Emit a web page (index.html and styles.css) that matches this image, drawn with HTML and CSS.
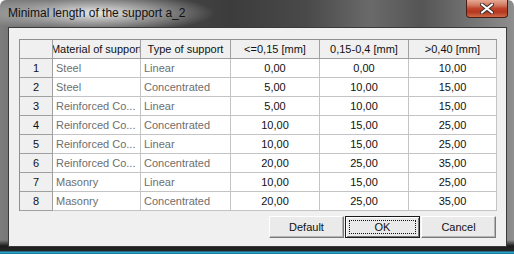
FILE: index.html
```html
<!DOCTYPE html>
<html lang="en">

<head>
    <meta charset="UTF-8">
    <title>Minimal length of the support a_2</title>
    <link rel="stylesheet" href="styles.css">
</head>

<body>
    <div class="window">
        <div class="titlebar">
            <span class="title">Minimal length of the support a_2</span>
            <div class="close">
                <svg width="14" height="11" viewBox="0 0 14 11">
                    <path d="M2 1.5 L12 9.5 M12 1.5 L2 9.5" stroke="#3a2a28" stroke-width="4" stroke-linecap="round" />
                    <path d="M2 1.5 L12 9.5 M12 1.5 L2 9.5" stroke="#ffffff" stroke-width="2.2" stroke-linecap="round" />
                </svg>
            </div>
        </div>
        <div class="client">
            <table class="grid">
                <tr class="head">
                    <th class="rowhead c1"></th>
                    <th class="c2"><span>Material of support</span></th>
                    <th class="c3"><span>Type of support</span></th>
                    <th class="c4"><span>&lt;=0,15 [mm]</span></th>
                    <th class="c5"><span>0,15-0,4 [mm]</span></th>
                    <th class="c6"><span>&gt;0,40 [mm]</span></th>
                </tr>
                <tr>
                    <th class="rowhead">1</th>
                    <td class="txt">Steel</td>
                    <td class="txt">Linear</td>
                    <td>0,00</td>
                    <td>0,00</td>
                    <td>10,00</td>
                </tr>
                <tr>
                    <th class="rowhead">2</th>
                    <td class="txt">Steel</td>
                    <td class="txt">Concentrated</td>
                    <td>5,00</td>
                    <td>10,00</td>
                    <td>15,00</td>
                </tr>
                <tr>
                    <th class="rowhead">3</th>
                    <td class="txt">Reinforced Co...</td>
                    <td class="txt">Linear</td>
                    <td>5,00</td>
                    <td>10,00</td>
                    <td>15,00</td>
                </tr>
                <tr>
                    <th class="rowhead">4</th>
                    <td class="txt">Reinforced Co...</td>
                    <td class="txt">Concentrated</td>
                    <td>10,00</td>
                    <td>15,00</td>
                    <td>25,00</td>
                </tr>
                <tr>
                    <th class="rowhead">5</th>
                    <td class="txt">Reinforced Co...</td>
                    <td class="txt">Linear</td>
                    <td>10,00</td>
                    <td>15,00</td>
                    <td>25,00</td>
                </tr>
                <tr>
                    <th class="rowhead">6</th>
                    <td class="txt">Reinforced Co...</td>
                    <td class="txt">Concentrated</td>
                    <td>20,00</td>
                    <td>25,00</td>
                    <td>35,00</td>
                </tr>
                <tr>
                    <th class="rowhead">7</th>
                    <td class="txt">Masonry</td>
                    <td class="txt">Linear</td>
                    <td>10,00</td>
                    <td>15,00</td>
                    <td>25,00</td>
                </tr>
                <tr>
                    <th class="rowhead">8</th>
                    <td class="txt">Masonry</td>
                    <td class="txt">Concentrated</td>
                    <td>20,00</td>
                    <td>25,00</td>
                    <td>35,00</td>
                </tr>
            </table>
            <div class="buttons">
                <button class="btn">Default</button>
                <button class="btn default"><span class="focus">OK</span></button>
                <button class="btn">Cancel</button>
            </div>
        </div>
    </div>
</body>

</html>
```

FILE: styles.css
```css
body {
    margin: 0;
    background-color: #ffffff;
}

.window {
    width: 514px;
    height: 254px;
    box-sizing: border-box;
    padding: 0 7px 7px 8px;
    border-radius: 6px 6px 0 0;
    background:
        radial-gradient(ellipse 120px 20px at 95px 13px, rgba(240, 240, 240, 0.95), rgba(240, 240, 240, 0) 100%),
        linear-gradient(180deg, rgba(0, 0, 0, 0) 240px, #1c1c1c 246px, #262626 251px, #2bb2dc 252px, #1a6f8c 254px),
        linear-gradient(90deg, #7d7d7d 0, #555555 10%, #3c3c3c 45%, #4a4a4a 60%, #6a6a6a 72%, #555555 82%, #8e8e8e 100%);
    font-family: "Liberation Sans", Arial, sans-serif;
}

.titlebar {
    height: 27px;
    display: flex;
    justify-content: space-between;
    align-items: flex-start;
}

.title {
    padding-top: 6px;
    font-size: 12px;
    color: #111111;
}

.close {
    width: 40px;
    height: 17px;
    margin-right: -1px;
    border: 1px solid #4a1e16;
    border-top: none;
    border-radius: 0 0 4px 4px;
    display: flex;
    justify-content: center;
    align-items: center;
    background: linear-gradient(180deg, #e7a893 0, #d27a62 30%, #c0452c 50%, #b3361f 70%, #cf6a45 100%);
}

.client {
    height: 220px;
    box-sizing: border-box;
    border: 1px solid #3a3a3a;
    background-color: #f0f0f0;
    padding: 11px 9px 0 10px;
}

.grid {
    border-collapse: separate;
    border-spacing: 0;
    table-layout: fixed;
    width: 478px;
    border-top: 1px solid #8f8f8f;
    border-left: 1px solid #8f8f8f;
    font-size: 11px;
}

.grid th,
.grid td {
    box-sizing: border-box;
    height: 19px;
    padding: 0;
    border-right: 1px solid #c4c4c4;
    border-bottom: 1px solid #c4c4c4;
    background-color: #ffffff;
    text-align: center;
    white-space: nowrap;
    overflow: hidden;
    color: #111111;
    font-weight: normal;
}

.grid .head th,
.grid th.rowhead {
    background-color: #f0f0f0;
    border-right-color: #a0a0a0;
    border-bottom-color: #a0a0a0;
}

.head th span {
    display: flex;
    justify-content: center;
}

.c1 { width: 33px; }
.c2 { width: 88px; }
.c3 { width: 90px; }
.c4 { width: 89px; }
.c5 { width: 89px; }
.c6 { width: 88px; }

.grid td.txt {
    text-align: left;
    padding-left: 3px;
    color: #6e6e6e;
}

.buttons {
    display: flex;
    justify-content: flex-end;
    gap: 1px;
    margin-top: 5px;
    padding-right: 1px;
}

.btn {
    width: 75px;
    height: 22px;
    padding: 0;
    box-sizing: border-box;
    background-color: #eaeaea;
    border: 1px solid;
    border-color: #ffffff #7a7a7a #7a7a7a #ffffff;
    box-shadow: inset -1px -1px 0 #b4b4b4;
    font-family: "Liberation Sans", Arial, sans-serif;
    font-size: 11px;
    color: #111111;
}

.btn.default {
    border: 1px solid #1a1a1a;
    box-shadow: inset 1px 1px 0 #ffffff, inset -1px -1px 0 #7a7a7a;
    padding: 3px;
}

.focus {
    display: flex;
    justify-content: center;
    align-items: center;
    height: 100%;
    border: 1px dotted #111111;
    box-sizing: border-box;
}
```
